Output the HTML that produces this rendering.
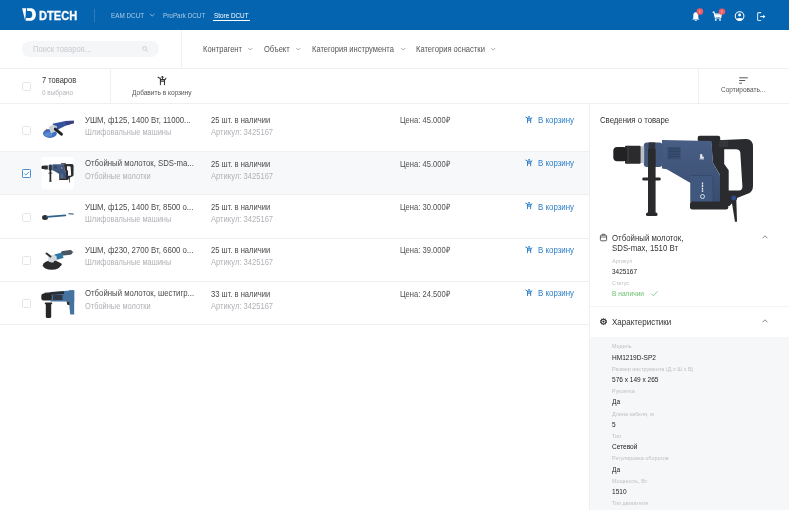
<!DOCTYPE html>
<html><head><meta charset="utf-8">
<style>
html,body{margin:0;padding:0;}
body{width:789px;height:510px;position:relative;overflow:hidden;background:#fff;font-family:"Liberation Sans",sans-serif;color:#333;}
.t{position:absolute;line-height:1;white-space:nowrap;}
.ab{position:absolute;}
.hl{position:absolute;height:1px;background:#EEEFF1;}
.vl{position:absolute;width:1px;background:#EEEFF1;}
.cb{position:absolute;width:7px;height:7px;border:0.8px solid #E3E4E6;border-radius:1.5px;background:#fff;}
</style></head><body>

<div id="root" style="position:absolute;left:0;top:0;width:789px;height:510px;overflow:hidden;will-change:transform">
<!-- HEADER -->
<div class="ab" style="left:0;top:0;width:789px;height:30px;background:#0464B0;"></div>
<svg class="ab" style="left:21px;top:7px" width="16" height="15" viewBox="21 7 16 15">
  <path d="M22.1 8.3 L26.1 8.3 L25.2 20.8 Z" fill="#fff"/>
  <path d="M26.7 8.3 L30.5 8.3 C34 8.3 35.9 11 35.9 14.5 C35.9 18.2 33.8 20.8 30.3 20.8 L25.7 20.8 L26.1 18 L30 18 C31.4 18 32.3 16.6 32.3 14.5 C32.3 12.4 31.4 10.9 30 10.9 L27.3 10.9 Z" fill="#fff"/>
</svg>
<div class="t" style="left:38.8px;top:8.5px;font-size:13.2px;font-weight:bold;color:#fff;-webkit-text-stroke:0.3px #fff;transform:scaleX(0.84);transform-origin:0 0;">DTECH</div>
<div class="ab" style="left:94px;top:8.5px;width:1px;height:13px;background:rgba(255,255,255,0.16)"></div>
<svg class="ab" style="left:149px;top:13px" width="7" height="4" viewBox="0 0 7 4"><path d="M1 1 L3.2 3 L5.4 1" stroke="rgba(255,255,255,0.75)" stroke-width="0.7" fill="none"/></svg>
<div class="ab" style="left:213.4px;top:20.2px;width:36.6px;height:0.8px;background:#fff"></div>

<!-- bell -->
<svg class="ab" style="left:689px;top:8px" width="16" height="14" viewBox="0 0 16 14">
  <path d="M6.8 4.2 C4.9 4.2 4.3 5.8 4.3 7.6 L4.3 10.2 L3.1 11.6 L10.5 11.6 L9.3 10.2 L9.3 7.6 C9.3 5.8 8.7 4.2 6.8 4.2 Z" fill="#fff"/>
  <rect x="5.8" y="11.9" width="2" height="0.9" fill="#fff"/>
  <circle cx="10.9" cy="3.6" r="3.3" fill="#EF5A63"/>
  <path d="M10.8 2.2 L10.8 4.9" stroke="#fff" stroke-width="0.5"/>
</svg>
<!-- cart -->
<svg class="ab" style="left:711px;top:8px" width="16" height="14" viewBox="0 0 16 14">
  <path d="M1.6 4.2 L3 4.2 L4.4 10 L9.6 10 L10.4 6 L3.6 6" stroke="#fff" stroke-width="1.2" fill="none"/>
  <rect x="4" y="6.4" width="5.8" height="2.6" fill="#fff"/>
  <circle cx="4.8" cy="11.9" r="0.9" fill="#fff"/><circle cx="9" cy="11.9" r="0.9" fill="#fff"/>
  <circle cx="11" cy="3.6" r="3.2" fill="#EF5A63"/>
  <path d="M10.9 2.2 L10.9 4.9" stroke="#fff" stroke-width="0.5"/>
</svg>
<!-- user -->
<svg class="ab" style="left:733px;top:9px" width="14" height="14" viewBox="733 9 14 14">
  <circle cx="739.6" cy="16.1" r="4.35" stroke="#fff" stroke-width="1.05" fill="none"/>
  <circle cx="739.6" cy="15.0" r="1.45" fill="#fff"/>
  <path d="M736.2 19.0 Q739.6 16.9 743.0 19.0 A4.0 4.0 0 0 1 736.2 19.0 Z" fill="#fff"/>
</svg>
<!-- logout -->
<svg class="ab" style="left:754px;top:10px" width="14" height="13" viewBox="754 10 14 13">
  <path d="M761.2 12.6 L758.6 12.6 Q757.6 12.6 757.6 13.6 L757.6 19.5 Q757.6 20.5 758.6 20.5 L761.2 20.5" stroke="#D0E2F2" stroke-width="1.1" fill="none"/>
  <path d="M760.3 16.6 L763.6 16.6" stroke="#fff" stroke-width="1.0"/>
  <path d="M763.2 14.8 L765.4 16.6 L763.2 18.4 Z" fill="#fff"/>
</svg>
<!-- SEARCH ROW -->
<div class="ab" style="left:22px;top:41px;width:137px;height:16px;border-radius:8px;background:#F5F6F8"></div>
<svg class="ab" style="left:141px;top:45px" width="9" height="8" viewBox="0 0 9 8"><circle cx="3.6" cy="3.4" r="1.9" stroke="#C5C7CB" stroke-width="0.8" fill="none"/><path d="M5 4.8 L6.8 6.5" stroke="#C5C7CB" stroke-width="0.9"/></svg>
<div class="vl" style="left:181px;top:30px;height:38px"></div>
<div class="hl" style="left:0;top:68px;width:789px"></div>

<svg class="ab" style="left:247px;top:47px" width="7" height="4" viewBox="0 0 7 4"><path d="M1.2 1 L3.2 3 L5.2 1" stroke="#777" stroke-width="0.6" fill="none"/></svg>
<svg class="ab" style="left:294.8px;top:47px" width="7" height="4" viewBox="0 0 7 4"><path d="M1.2 1 L3.2 3 L5.2 1" stroke="#777" stroke-width="0.6" fill="none"/></svg>
<svg class="ab" style="left:399.8px;top:47px" width="7" height="4" viewBox="0 0 7 4"><path d="M1.2 1 L3.2 3 L5.2 1" stroke="#777" stroke-width="0.6" fill="none"/></svg>
<svg class="ab" style="left:490.3px;top:47px" width="7" height="4" viewBox="0 0 7 4"><path d="M1.2 1 L3.2 3 L5.2 1" stroke="#777" stroke-width="0.6" fill="none"/></svg>

<!-- TOOLBAR -->
<div class="cb" style="left:22px;top:82px"></div>
<div class="vl" style="left:110px;top:68px;height:35px"></div>
<svg class="ab" style="left:154px;top:73px" width="16" height="15" viewBox="154 73 16 15">
  <path d="M158.1 77.3 L160.4 78.6 L160.4 84.6 M164.5 84.6 L164.5 80.2 L165.9 78.2 M160.4 81.3 H164.5 M160.4 79.6 H165.2" stroke="#333" stroke-width="1.05" fill="none" stroke-linecap="round"/>
  <path d="M162.4 76.2 V79.4 M161.1 77.6 L162.4 76.1 L163.7 77.6" stroke="#333" stroke-width="1.0" fill="none"/>
</svg>
<div class="vl" style="left:698px;top:68px;height:35px"></div>
<svg class="ab" style="left:738px;top:76px" width="11" height="9" viewBox="0 0 11 9">
  <path d="M1.2 1.8 L9.8 1.8 M1.2 4.5 L7.2 4.5 M1.2 7.2 L4 7.2" stroke="#444" stroke-width="0.9"/>
</svg>
<div class="hl" style="left:0;top:103px;width:789px"></div>

<!-- LIST -->
<div class="ab" style="left:0;top:151px;width:589px;height:43.3px;background:#F7F8FA"></div>
<div class="hl" style="left:0;top:151px;width:589px"></div>
<div class="hl" style="left:0;top:194.2px;width:589px"></div>
<div class="hl" style="left:0;top:237.5px;width:589px"></div>
<div class="hl" style="left:0;top:281.1px;width:589px"></div>
<div class="hl" style="left:0;top:324.2px;width:589px"></div>


<svg class="ab" style="left:0;top:0" width="589" height="330" viewBox="0 0 589 330">
 <!-- row1 grinder -->
 <path d="M52.4 123.8 L65.6 121.1 L73.9 120.7 L73.7 123.3 L66 125.6 L57 130 Z" fill="#34549E"/>
 <path d="M65.6 121.1 L73.9 120.7 L73.7 123.3 L66 125.6 Z" fill="#3A3F86"/>
 <ellipse cx="49.9" cy="133.4" rx="6.9" ry="4.5" fill="#3C70C2"/>
 <ellipse cx="48.5" cy="134.5" rx="4" ry="2.2" fill="#5A8AD0"/>
 <path d="M48.7 127.5 Q50 124.9 53 124.9 L56.8 126 L57 131 L51 133.3 Z" fill="#CDD1D7"/>
 <path d="M55.3 129.2 L61.4 134.2" stroke="#232326" stroke-width="3" stroke-linecap="round"/>
 <circle cx="46.8" cy="129.9" r="0.8" fill="#B04040"/>
 <!-- row2 box -->
 <rect x="41.5" y="157" width="32.5" height="32.5" rx="3" fill="#fff"/>
 <g transform="translate(-98.88 132.06) scale(0.229)">
<g>
 <path d="M711 140.5 L746 139 Q753 139 753 147 L753 186 Q753 192.5 747 194 L737 198 L729.5 206 L720 206 L720 175 L713 163 Z M724.2 149.3 L736 149.3 Q739.5 149.3 740.3 152.5 L742.4 186.5 Q742.4 190.4 739 190.4 L728.7 190.4 L728.7 170.3 L724.2 164 Z" fill="#2A2B2E" fill-rule="evenodd"/>
 <path d="M719 140 L728 140 L728 147 L719 147 Z" fill="#34363A"/>
 <rect x="697.7" y="135.8" width="22.5" height="6" rx="2" fill="#2A2B2E"/>
 <linearGradient id="bg1" x1="0" y1="0" x2="0" y2="1"><stop offset="0" stop-color="#485E84"/><stop offset="1" stop-color="#394D70"/></linearGradient><path d="M662 140.1 L711.4 140.9 L713 163 L720 175.3 L720 202 L690.5 202 L690.5 183 L666.8 169.2 L662 168.5 Z" fill="url(#bg1)"/>
 <path d="M690.5 175.5 L711 175.5 L713 178 L713 202 L690.5 202 Z" fill="#41587E"/>
 <path d="M690.5 175.5 L711 175.5 L713 178 L713 202" stroke="#33476A" stroke-width="0.8" fill="none"/>
 <rect x="690" y="201.5" width="38.3" height="8" rx="2.2" fill="#2A2B2E"/>
 <rect x="643.8" y="142.4" width="18.6" height="24.5" rx="3.2" fill="#42587D"/>
 <rect x="640" y="146.3" width="4.2" height="16.7" fill="#BDC1C7"/>
 <rect x="625" y="145.8" width="15.6" height="18" rx="1" fill="#2B2B2D"/>
 <rect x="613.3" y="147" width="14" height="14.2" rx="4" fill="#222224"/>
 <rect x="627.5" y="145.8" width="1.2" height="18" fill="#404043"/>
 <rect x="648.6" y="142.4" width="6.6" height="24.5" fill="#2F3136"/>
 <rect x="648" y="148.5" width="7.6" height="67.5" rx="1.6" fill="#2A2A2C"/>
 <rect x="642.3" y="177.6" width="18.4" height="3" rx="1.4" fill="#2A2A2C"/>
 <rect x="646" y="212.5" width="11.5" height="3.5" rx="1.5" fill="#2A2A2C"/>
 <path d="M731.3 199 L736.3 199 L737 221.8 L735 221.8 Z" fill="#2A2A2C"/>
 <circle cx="733.8" cy="198" r="2.9" fill="#2F4E8C" stroke="#2A2A2C" stroke-width="0.9"/>
 <rect x="667.6" y="147" width="13" height="12.3" fill="#384D70"/>
 <path d="M668.5 149 H679.8 M668.5 151.5 H679.8 M668.5 154 H679.8 M668.5 156.5 H679.8" stroke="#2C3D5C" stroke-width="0.6"/>
 <path d="M700.4 154.5 L702 154.5 L702 157 L703.5 157 L703.5 158.2 L700.4 158.2 Z M699.5 159 H704" stroke="#E6E9EE" stroke-width="0.7" fill="#E6E9EE"/>
 <circle cx="702.5" cy="196.5" r="2" fill="none" stroke="#E6E9EE" stroke-width="0.9"/>
 <path d="M702.5 182.5 V192" stroke="#E6E9EE" stroke-width="1.3" stroke-dasharray="2 0.6"/>
</g>
</g>
 <!-- row3 thin grinder -->
 <ellipse cx="45" cy="217.4" rx="3" ry="2.5" fill="#2E2F33"/>
 <path d="M47 216.8 L65.4 215.4" stroke="#2F6490" stroke-width="1.7" stroke-linecap="round"/>
 <path d="M68.5 213.6 L73.7 214.2" stroke="#4A6F95" stroke-width="1.2"/>
 <!-- row4 grinder -->
 <ellipse cx="51.7" cy="265.2" rx="8.9" ry="4.6" fill="#2B2B2E"/>
 <path d="M63 253.3 L70.2 252.4" stroke="#4A5560" stroke-width="4.6" stroke-linecap="round"/>
 <path d="M55 257.2 L62.8 255.3" stroke="#2F76A0" stroke-width="5.8"/>
 <path d="M48.2 256.5 Q52 253.8 56.5 256 L57 261.5 Q52 263.5 48.5 261.5 Z" fill="#D5D8DD"/>
 <path d="M55 262 L60.5 264.5" stroke="#2B2B2E" stroke-width="2.6" stroke-linecap="round"/>
 <path d="M46.6 253.5 L50.4 256.6" stroke="#333" stroke-width="2" stroke-linecap="round"/>
 <path d="M70 252.5 L73.3 252" stroke="#555" stroke-width="0.9"/>
 <!-- row5 rotary hammer -->
 <path d="M50.3 292 L74.2 290.3 L74.2 301.4 L50.3 301.4 Z" fill="#4573A0"/>
 <path d="M44.5 292.8 L64 291.3 L64 294 L44.5 295.2 Z" fill="#2A2B2E"/>
 <rect x="41.3" y="293.6" width="10.5" height="7" rx="2.5" fill="#262628"/>
 <rect x="53" y="295" width="9.5" height="5" fill="#303845"/>
 <path d="M68.9 290.3 L74.2 290.3 L74.2 314.6 L70.2 314.6 L68.9 301.4 Z" fill="#4573A0"/>
 <path d="M66.5 301.4 L69.2 301.4 L69.5 305 L67.5 305 Z" fill="#2A2B2E"/>
 <rect x="45.8" y="303" width="5.4" height="14.9" rx="1.5" fill="#27272A"/>
 <rect x="44.8" y="302.6" width="7.4" height="1.6" rx="0.6" fill="#27272A"/>
</svg>
<div class="cb" style="left:22px;top:125.90px"></div>
<div class="t" style="left:85.30px;top:116.15px;font-size:8.89px;color:#4A4A4A;transform:scaleX(0.8772);transform-origin:0 0;">УШМ, ф125, 1400 Вт, 11000...</div>
<div class="t" style="left:85.30px;top:128.35px;font-size:8.49px;color:#B0B2B6;transform:scaleX(0.8772);transform-origin:0 0;">Шлифовальные машины</div>
<div class="t" style="left:210.90px;top:116.27px;font-size:8.66px;color:#4A4A4A;transform:scaleX(0.8772);transform-origin:0 0;">25 шт. в наличии</div>
<div class="t" style="left:210.90px;top:128.27px;font-size:8.66px;color:#B0B2B6;transform:scaleX(0.8772);transform-origin:0 0;">Артикул: 3425167</div>
<div class="t" style="left:399.60px;top:116.27px;font-size:8.66px;color:#505050;transform:scaleX(0.8772);transform-origin:0 0;">Цена: 45.000₽</div>
<svg class="ab" style="left:524px;top:114.60px" width="10" height="10" viewBox="0 0 10 10"><g transform="translate(1.8 1.3) scale(0.76)"><path d="M0 1.1 L2.3 2.4 L2.3 8.4 M6.4 8.4 L6.4 4 L7.8 2 M2.3 5.1 H6.4 M2.3 3.3 H7" stroke="#2C7FC8" stroke-width="1.3" fill="none" stroke-linecap="round"/><path d="M4.3 0 V3.2 M3 1.4 L4.3 -0.1 L5.6 1.4" stroke="#2C7FC8" stroke-width="1.2" fill="none"/></g></svg>
<div class="t" style="left:538.30px;top:116.10px;font-size:9.01px;color:#2C7FC8;transform:scaleX(0.8772);transform-origin:0 0;">В корзину</div>
<div class="ab" style="left:22px;top:169.23px;width:7.2px;height:7.2px;border:0.8px solid #4A90D0;border-radius:1.2px;background:#fff"></div>
<svg class="ab" style="left:22px;top:169.23px" width="9" height="9" viewBox="0 0 9 9"><path d="M2.3 4.6 L3.9 6.1 L6.9 2.9" stroke="#3A86CC" stroke-width="0.9" fill="none"/></svg>
<div class="t" style="left:85.30px;top:159.48px;font-size:8.89px;color:#4A4A4A;transform:scaleX(0.8772);transform-origin:0 0;">Отбойный молоток, SDS-ma...</div>
<div class="t" style="left:85.30px;top:171.68px;font-size:8.49px;color:#B0B2B6;transform:scaleX(0.8772);transform-origin:0 0;">Отбойные молотки</div>
<div class="t" style="left:210.90px;top:159.60px;font-size:8.66px;color:#4A4A4A;transform:scaleX(0.8772);transform-origin:0 0;">25 шт. в наличии</div>
<div class="t" style="left:210.90px;top:171.60px;font-size:8.66px;color:#B0B2B6;transform:scaleX(0.8772);transform-origin:0 0;">Артикул: 3425167</div>
<div class="t" style="left:399.60px;top:159.60px;font-size:8.66px;color:#505050;transform:scaleX(0.8772);transform-origin:0 0;">Цена: 45.000₽</div>
<svg class="ab" style="left:524px;top:157.93px" width="10" height="10" viewBox="0 0 10 10"><g transform="translate(1.8 1.3) scale(0.76)"><path d="M0 1.1 L2.3 2.4 L2.3 8.4 M6.4 8.4 L6.4 4 L7.8 2 M2.3 5.1 H6.4 M2.3 3.3 H7" stroke="#2C7FC8" stroke-width="1.3" fill="none" stroke-linecap="round"/><path d="M4.3 0 V3.2 M3 1.4 L4.3 -0.1 L5.6 1.4" stroke="#2C7FC8" stroke-width="1.2" fill="none"/></g></svg>
<div class="t" style="left:538.30px;top:159.43px;font-size:9.01px;color:#2C7FC8;transform:scaleX(0.8772);transform-origin:0 0;">В корзину</div>
<div class="cb" style="left:22px;top:212.56px"></div>
<div class="t" style="left:85.30px;top:202.81px;font-size:8.89px;color:#4A4A4A;transform:scaleX(0.8772);transform-origin:0 0;">УШМ, ф125, 1400 Вт, 8500 о...</div>
<div class="t" style="left:85.30px;top:215.01px;font-size:8.49px;color:#B0B2B6;transform:scaleX(0.8772);transform-origin:0 0;">Шлифовальные машины</div>
<div class="t" style="left:210.90px;top:202.93px;font-size:8.66px;color:#4A4A4A;transform:scaleX(0.8772);transform-origin:0 0;">25 шт. в наличии</div>
<div class="t" style="left:210.90px;top:214.93px;font-size:8.66px;color:#B0B2B6;transform:scaleX(0.8772);transform-origin:0 0;">Артикул: 3425167</div>
<div class="t" style="left:399.60px;top:202.93px;font-size:8.66px;color:#505050;transform:scaleX(0.8772);transform-origin:0 0;">Цена: 30.000₽</div>
<svg class="ab" style="left:524px;top:201.26px" width="10" height="10" viewBox="0 0 10 10"><g transform="translate(1.8 1.3) scale(0.76)"><path d="M0 1.1 L2.3 2.4 L2.3 8.4 M6.4 8.4 L6.4 4 L7.8 2 M2.3 5.1 H6.4 M2.3 3.3 H7" stroke="#2C7FC8" stroke-width="1.3" fill="none" stroke-linecap="round"/><path d="M4.3 0 V3.2 M3 1.4 L4.3 -0.1 L5.6 1.4" stroke="#2C7FC8" stroke-width="1.2" fill="none"/></g></svg>
<div class="t" style="left:538.30px;top:202.76px;font-size:9.01px;color:#2C7FC8;transform:scaleX(0.8772);transform-origin:0 0;">В корзину</div>
<div class="cb" style="left:22px;top:255.89px"></div>
<div class="t" style="left:85.30px;top:246.14px;font-size:8.89px;color:#4A4A4A;transform:scaleX(0.8772);transform-origin:0 0;">УШМ, ф230, 2700 Вт, 6600 о...</div>
<div class="t" style="left:85.30px;top:258.34px;font-size:8.49px;color:#B0B2B6;transform:scaleX(0.8772);transform-origin:0 0;">Шлифовальные машины</div>
<div class="t" style="left:210.90px;top:246.26px;font-size:8.66px;color:#4A4A4A;transform:scaleX(0.8772);transform-origin:0 0;">25 шт. в наличии</div>
<div class="t" style="left:210.90px;top:258.26px;font-size:8.66px;color:#B0B2B6;transform:scaleX(0.8772);transform-origin:0 0;">Артикул: 3425167</div>
<div class="t" style="left:399.60px;top:246.26px;font-size:8.66px;color:#505050;transform:scaleX(0.8772);transform-origin:0 0;">Цена: 39.000₽</div>
<svg class="ab" style="left:524px;top:244.59px" width="10" height="10" viewBox="0 0 10 10"><g transform="translate(1.8 1.3) scale(0.76)"><path d="M0 1.1 L2.3 2.4 L2.3 8.4 M6.4 8.4 L6.4 4 L7.8 2 M2.3 5.1 H6.4 M2.3 3.3 H7" stroke="#2C7FC8" stroke-width="1.3" fill="none" stroke-linecap="round"/><path d="M4.3 0 V3.2 M3 1.4 L4.3 -0.1 L5.6 1.4" stroke="#2C7FC8" stroke-width="1.2" fill="none"/></g></svg>
<div class="t" style="left:538.30px;top:246.09px;font-size:9.01px;color:#2C7FC8;transform:scaleX(0.8772);transform-origin:0 0;">В корзину</div>
<div class="cb" style="left:22px;top:299.22px"></div>
<div class="t" style="left:85.30px;top:289.47px;font-size:8.89px;color:#4A4A4A;transform:scaleX(0.8772);transform-origin:0 0;">Отбойный молоток, шестигр...</div>
<div class="t" style="left:85.30px;top:301.67px;font-size:8.49px;color:#B0B2B6;transform:scaleX(0.8772);transform-origin:0 0;">Отбойные молотки</div>
<div class="t" style="left:210.90px;top:289.59px;font-size:8.66px;color:#4A4A4A;transform:scaleX(0.8772);transform-origin:0 0;">33 шт. в наличии</div>
<div class="t" style="left:210.90px;top:301.59px;font-size:8.66px;color:#B0B2B6;transform:scaleX(0.8772);transform-origin:0 0;">Артикул: 3425167</div>
<div class="t" style="left:399.60px;top:289.59px;font-size:8.66px;color:#505050;transform:scaleX(0.8772);transform-origin:0 0;">Цена: 24.500₽</div>
<svg class="ab" style="left:524px;top:287.92px" width="10" height="10" viewBox="0 0 10 10"><g transform="translate(1.8 1.3) scale(0.76)"><path d="M0 1.1 L2.3 2.4 L2.3 8.4 M6.4 8.4 L6.4 4 L7.8 2 M2.3 5.1 H6.4 M2.3 3.3 H7" stroke="#2C7FC8" stroke-width="1.3" fill="none" stroke-linecap="round"/><path d="M4.3 0 V3.2 M3 1.4 L4.3 -0.1 L5.6 1.4" stroke="#2C7FC8" stroke-width="1.2" fill="none"/></g></svg>
<div class="t" style="left:538.30px;top:289.42px;font-size:9.01px;color:#2C7FC8;transform:scaleX(0.8772);transform-origin:0 0;">В корзину</div>


<!-- PANEL -->
<div class="vl" style="left:589px;top:103px;height:407px"></div>
<div class="t" style="left:110.60px;top:12.21px;font-size:6.99px;color:rgba(255,255,255,0.65);transform:scaleX(0.9091);transform-origin:0 0;">EAM DCUT</div>
<div class="t" style="left:162.80px;top:12.21px;font-size:6.99px;color:rgba(255,255,255,0.65);transform:scaleX(0.9091);transform-origin:0 0;">ProPark DCUT</div>
<div class="t" style="left:213.90px;top:12.21px;font-size:6.99px;color:#fff;transform:scaleX(0.9091);transform-origin:0 0;">Store DCUT</div>
<div class="t" style="left:32.80px;top:44.74px;font-size:8.72px;color:#CACCD0;transform:scaleX(0.8772);transform-origin:0 0;">Поиск товаров...</div>
<div class="t" style="left:203.00px;top:45.18px;font-size:8.61px;color:#555;transform:scaleX(0.8772);transform-origin:0 0;">Контрагент</div>
<div class="t" style="left:263.80px;top:45.18px;font-size:8.61px;color:#555;transform:scaleX(0.8772);transform-origin:0 0;">Объект</div>
<div class="t" style="left:311.80px;top:45.18px;font-size:8.61px;color:#555;transform:scaleX(0.8772);transform-origin:0 0;">Категория инструмента</div>
<div class="t" style="left:416.00px;top:45.15px;font-size:8.66px;color:#555;transform:scaleX(0.8772);transform-origin:0 0;">Категория оснастки</div>
<div class="t" style="left:41.80px;top:76.27px;font-size:8.55px;color:#333;transform:scaleX(0.8772);transform-origin:0 0;">7 товаров</div>
<div class="t" style="left:41.80px;top:88.58px;font-size:7.04px;color:#B4B6BA;transform:scaleX(0.9091);transform-origin:0 0;">0 выбрано</div>
<div class="t" style="left:132.30px;top:88.90px;font-size:7.19px;color:#555;transform:scaleX(0.9091);transform-origin:0 0;">Добавить в корзину</div>
<div class="t" style="left:721.00px;top:87.17px;font-size:7.15px;color:#555;transform:scaleX(0.9091);transform-origin:0 0;">Сортировать...</div>
<div class="t" style="left:600.00px;top:116.15px;font-size:8.89px;color:#333;transform:scaleX(0.8772);transform-origin:0 0;">Сведения о товаре</div>

<svg class="ab" style="left:589px;top:125px" width="200" height="105" viewBox="589 125 200 105">
<g>
 <path d="M711 140.5 L746 139 Q753 139 753 147 L753 186 Q753 192.5 747 194 L737 198 L729.5 206 L720 206 L720 175 L713 163 Z M724.2 149.3 L736 149.3 Q739.5 149.3 740.3 152.5 L742.4 186.5 Q742.4 190.4 739 190.4 L728.7 190.4 L728.7 170.3 L724.2 164 Z" fill="#2A2B2E" fill-rule="evenodd"/>
 <path d="M719 140 L728 140 L728 147 L719 147 Z" fill="#34363A"/>
 <rect x="697.7" y="135.8" width="22.5" height="6" rx="2" fill="#2A2B2E"/>
 <linearGradient id="bg1" x1="0" y1="0" x2="0" y2="1"><stop offset="0" stop-color="#485E84"/><stop offset="1" stop-color="#394D70"/></linearGradient><path d="M662 140.1 L711.4 140.9 L713 163 L720 175.3 L720 202 L690.5 202 L690.5 183 L666.8 169.2 L662 168.5 Z" fill="url(#bg1)"/>
 <path d="M690.5 175.5 L711 175.5 L713 178 L713 202 L690.5 202 Z" fill="#41587E"/>
 <path d="M690.5 175.5 L711 175.5 L713 178 L713 202" stroke="#33476A" stroke-width="0.8" fill="none"/>
 <rect x="690" y="201.5" width="38.3" height="8" rx="2.2" fill="#2A2B2E"/>
 <rect x="643.8" y="142.4" width="18.6" height="24.5" rx="3.2" fill="#42587D"/>
 <rect x="640" y="146.3" width="4.2" height="16.7" fill="#BDC1C7"/>
 <rect x="625" y="145.8" width="15.6" height="18" rx="1" fill="#2B2B2D"/>
 <rect x="613.3" y="147" width="14" height="14.2" rx="4" fill="#222224"/>
 <rect x="627.5" y="145.8" width="1.2" height="18" fill="#404043"/>
 <rect x="648.6" y="142.4" width="6.6" height="24.5" fill="#2F3136"/>
 <rect x="648" y="148.5" width="7.6" height="67.5" rx="1.6" fill="#2A2A2C"/>
 <rect x="642.3" y="177.6" width="18.4" height="3" rx="1.4" fill="#2A2A2C"/>
 <rect x="646" y="212.5" width="11.5" height="3.5" rx="1.5" fill="#2A2A2C"/>
 <path d="M731.3 199 L736.3 199 L737 221.8 L735 221.8 Z" fill="#2A2A2C"/>
 <circle cx="733.8" cy="198" r="2.9" fill="#2F4E8C" stroke="#2A2A2C" stroke-width="0.9"/>
 <rect x="667.6" y="147" width="13" height="12.3" fill="#384D70"/>
 <path d="M668.5 149 H679.8 M668.5 151.5 H679.8 M668.5 154 H679.8 M668.5 156.5 H679.8" stroke="#2C3D5C" stroke-width="0.6"/>
 <path d="M700.4 154.5 L702 154.5 L702 157 L703.5 157 L703.5 158.2 L700.4 158.2 Z M699.5 159 H704" stroke="#E6E9EE" stroke-width="0.7" fill="#E6E9EE"/>
 <circle cx="702.5" cy="196.5" r="2" fill="none" stroke="#E6E9EE" stroke-width="0.9"/>
 <path d="M702.5 182.5 V192" stroke="#E6E9EE" stroke-width="1.3" stroke-dasharray="2 0.6"/>
</g>
</svg>
<svg class="ab" style="left:598.5px;top:233px" width="9" height="9" viewBox="0 0 9 9"><rect x="1.4" y="2.2" width="6.2" height="5.6" rx="1" stroke="#333" stroke-width="0.8" fill="none"/><path d="M1.4 4 H7.6 M3 2.2 L3.4 1.2 L5.6 1.2 L6 2.2" stroke="#333" stroke-width="0.7" fill="none"/></svg>
<div class="t" style="left:612.00px;top:234.13px;font-size:8.95px;color:#333;transform:scaleX(0.8772);transform-origin:0 0;">Отбойный молоток,</div>
<div class="t" style="left:612.00px;top:243.73px;font-size:8.95px;color:#333;transform:scaleX(0.8772);transform-origin:0 0;">SDS-max, 1510 Вт</div>
<svg class="ab" style="left:760.5px;top:233.5px" width="8" height="6" viewBox="0 0 8 6"><path d="M1.5 4.3 L4 1.8 L6.5 4.3" stroke="#555" stroke-width="0.7" fill="none"/></svg>
<div class="t" style="left:612.00px;top:258.93px;font-size:5.74px;color:#BDBFC3;transform:scaleX(0.9524);transform-origin:0 0;">Артикул</div>
<div class="t" style="left:612.00px;top:268.17px;font-size:7.06px;color:#222;transform:scaleX(0.9091);transform-origin:0 0;">3425167</div>
<div class="t" style="left:612.00px;top:281.37px;font-size:5.67px;color:#BDBFC3;transform:scaleX(0.9524);transform-origin:0 0;">Статус</div>
<div class="t" style="left:612.00px;top:290.25px;font-size:7.30px;color:#6CC070;transform:scaleX(0.9091);transform-origin:0 0;">В наличии</div>
<svg class="ab" style="left:649.5px;top:289.5px" width="9" height="7" viewBox="0 0 9 7"><path d="M1.2 3.6 L3.2 5.6 L7.6 1.4" stroke="#6CC070" stroke-width="0.8" fill="none"/></svg>
<div class="ab" style="left:590px;top:305.5px;width:199px;height:1.5px;background:#F3F4F6"></div>
<svg class="ab" style="left:598.5px;top:317px" width="9" height="9" viewBox="0 0 9 9"><path d="M4.5 0.9 L5.3 1.9 L6.6 1.6 L6.9 2.9 L8.1 3.5 L7.5 4.6 L8.1 5.6 L6.9 6.2 L6.6 7.5 L5.3 7.2 L4.5 8.2 L3.7 7.2 L2.4 7.5 L2.1 6.2 L0.9 5.6 L1.5 4.6 L0.9 3.5 L2.1 2.9 L2.4 1.6 L3.7 1.9 Z" fill="#333"/><circle cx="4.5" cy="4.55" r="1.9" fill="#fff"/><circle cx="4.5" cy="4.55" r="1.1" fill="#333"/></svg>
<div class="t" style="left:612.20px;top:318.04px;font-size:9.12px;color:#333;transform:scaleX(0.8772);transform-origin:0 0;">Характеристики</div>
<svg class="ab" style="left:760.5px;top:317.5px" width="8" height="6" viewBox="0 0 8 6"><path d="M1.5 4.3 L4 1.8 L6.5 4.3" stroke="#555" stroke-width="0.7" fill="none"/></svg>
<div class="ab" style="left:590px;top:336.6px;width:199px;height:174px;background:#F6F7F9"></div>
<div class="t" style="left:612.00px;top:344.23px;font-size:5.73px;color:#BDBFC3;transform:scaleX(0.9524);transform-origin:0 0;">Модель</div>
<div class="t" style="left:612.00px;top:353.50px;font-size:7.19px;color:#222;transform:scaleX(0.9091);transform-origin:0 0;">HM1219D-SP2</div>
<div class="t" style="left:612.00px;top:366.68px;font-size:5.73px;color:#BDBFC3;transform:scaleX(0.9524);transform-origin:0 0;">Размер инструмента (Д х Ш х В)</div>
<div class="t" style="left:612.00px;top:375.95px;font-size:7.19px;color:#222;transform:scaleX(0.9091);transform-origin:0 0;">576 x 149 x 265</div>
<div class="t" style="left:612.00px;top:389.13px;font-size:5.73px;color:#BDBFC3;transform:scaleX(0.9524);transform-origin:0 0;">Рукоятка</div>
<div class="t" style="left:612.00px;top:398.40px;font-size:7.19px;color:#222;transform:scaleX(0.9091);transform-origin:0 0;">Да</div>
<div class="t" style="left:612.00px;top:411.58px;font-size:5.73px;color:#BDBFC3;transform:scaleX(0.9524);transform-origin:0 0;">Длина кабеля, м</div>
<div class="t" style="left:612.00px;top:420.85px;font-size:7.19px;color:#222;transform:scaleX(0.9091);transform-origin:0 0;">5</div>
<div class="t" style="left:612.00px;top:434.03px;font-size:5.73px;color:#BDBFC3;transform:scaleX(0.9524);transform-origin:0 0;">Тип</div>
<div class="t" style="left:612.00px;top:443.30px;font-size:7.19px;color:#222;transform:scaleX(0.9091);transform-origin:0 0;">Сетевой</div>
<div class="t" style="left:612.00px;top:456.48px;font-size:5.73px;color:#BDBFC3;transform:scaleX(0.9524);transform-origin:0 0;">Регулировка оборотов</div>
<div class="t" style="left:612.00px;top:465.75px;font-size:7.19px;color:#222;transform:scaleX(0.9091);transform-origin:0 0;">Да</div>
<div class="t" style="left:612.00px;top:478.93px;font-size:5.73px;color:#BDBFC3;transform:scaleX(0.9524);transform-origin:0 0;">Мощность, Вт</div>
<div class="t" style="left:612.00px;top:488.20px;font-size:7.19px;color:#222;transform:scaleX(0.9091);transform-origin:0 0;">1510</div>
<div class="t" style="left:612.00px;top:501.38px;font-size:5.73px;color:#BDBFC3;transform:scaleX(0.9524);transform-origin:0 0;">Тип двигателя</div>


</div>
</body></html>
